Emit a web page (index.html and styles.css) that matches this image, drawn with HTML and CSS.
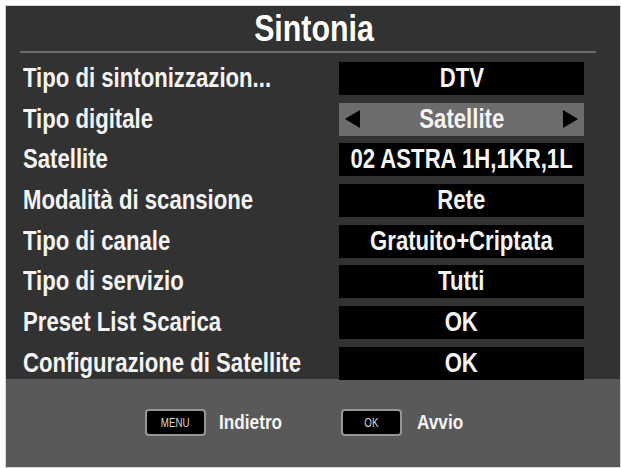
FILE: index.html
```html
<!DOCTYPE html>
<html lang="it">
<head>
<meta charset="utf-8">
<title>Sintonia</title>
<link rel="stylesheet" href="styles.css">
</head>
<body>
<div class="panel">
  <div class="header">
    <h1 class="title"><span class="narrow">Sintonia</span></h1>
  </div>
  <div class="divider"></div>
  <div class="rows">
    <div class="row">
      <div class="label"><span class="narrow">Tipo di sintonizzazion...</span></div>
      <div class="value"><span class="narrow">DTV</span></div>
    </div>
    <div class="row">
      <div class="label"><span class="narrow">Tipo digitale</span></div>
      <div class="value selected">
        <svg class="arrow arrow-left" viewBox="0 0 15 18" width="15" height="18"><polygon points="15,0 15,18 0,9" fill="#000"/></svg>
        <span class="narrow">Satellite</span>
        <svg class="arrow arrow-right" viewBox="0 0 15 18" width="15" height="18"><polygon points="0,0 0,18 15,9" fill="#000"/></svg>
      </div>
    </div>
    <div class="row">
      <div class="label"><span class="narrow">Satellite</span></div>
      <div class="value"><span class="narrow">02 ASTRA 1H,1KR,1L</span></div>
    </div>
    <div class="row">
      <div class="label"><span class="narrow">Modalità di scansione</span></div>
      <div class="value"><span class="narrow">Rete</span></div>
    </div>
    <div class="row">
      <div class="label"><span class="narrow">Tipo di canale</span></div>
      <div class="value"><span class="narrow">Gratuito+Criptata</span></div>
    </div>
    <div class="row">
      <div class="label"><span class="narrow">Tipo di servizio</span></div>
      <div class="value"><span class="narrow">Tutti</span></div>
    </div>
    <div class="row">
      <div class="label"><span class="narrow">Preset List Scarica</span></div>
      <div class="value"><span class="narrow">OK</span></div>
    </div>
    <div class="row">
      <div class="label"><span class="narrow">Configurazione di Satellite</span></div>
      <div class="value"><span class="narrow">OK</span></div>
    </div>
  </div>
  <div class="footer">
    <div class="hint hint-first">
      <span class="key"><span class="narrow key-text">MENU</span></span>
      <span class="hint-text"><span class="narrow">Indietro</span></span>
    </div>
    <div class="hint">
      <span class="key"><span class="narrow key-text">OK</span></span>
      <span class="hint-text"><span class="narrow">Avvio</span></span>
    </div>
  </div>
</div>
</body>
</html>
```

FILE: styles.css
```css
html, body {
  margin: 0;
  padding: 0;
  background: #ffffff;
}

body {
  width: 621px;
  height: 468px;
  overflow: hidden;
  font-family: "Liberation Sans", Arial, sans-serif;
  font-weight: bold;
  color: #f2f2f2;
}

.narrow {
  display: inline-block;
  flex: none;
  white-space: nowrap;
  transform: scaleX(0.82);
  transform-origin: center center;
}

.panel {
  margin: 6px 1px 0 6px;
  width: 614px;
  height: 461px;
  background: #323232;
  display: flex;
  flex-direction: column;
  box-shadow: 0 0 0 1px #d8d8d8;
}

.header {
  height: 45px;
  display: flex;
  align-items: center;
  justify-content: center;
}

.title {
  margin: 0;
  font-size: 37px;
  line-height: 45px;
  font-weight: bold;
  color: #ffffff;
  padding-left: 2px;
}

.divider {
  height: 2px;
  margin: 0 24px 0 14px;
  background: #6c6c6c;
}

.rows {
  padding: 9px 36px 0 17px;
  display: flex;
  flex-direction: column;
  gap: 7.7px;
  height: 326px;
  box-sizing: border-box;
}

.row {
  display: flex;
  align-items: center;
  height: 33px;
}

.label {
  flex: 1;
  min-width: 0;
  font-size: 27px;
  line-height: 33px;
  white-space: nowrap;
  color: #f4f4f4;
}

.label .narrow {
  transform-origin: left center;
}

.value {
  width: 245px;
  height: 33px;
  flex: none;
  background: #000000;
  font-size: 27px;
  line-height: 33px;
  color: #f4f4f4;
  white-space: nowrap;
  position: relative;
  display: flex;
  justify-content: center;
  align-items: center;
}

.value.selected {
  background: #6c6c6c;
}

.arrow {
  position: absolute;
  top: 7.5px;
}

.arrow-left {
  left: 6px;
}

.arrow-right {
  right: 6px;
}

.footer {
  flex: 1;
  background: #595959;
  display: flex;
  align-items: center;
  padding: 0 0 2px 139px;
  box-sizing: border-box;
}

.hint {
  display: flex;
  align-items: center;
}

.hint-first {
  width: 196px;
}

.key {
  width: 61px;
  height: 27px;
  box-sizing: border-box;
  background: #000000;
  border: 2px solid #969696;
  border-radius: 4px;
  display: flex;
  align-items: center;
  justify-content: center;
  font-size: 13px;
  font-weight: normal;
  color: #d8d8d8;
}

.key-text {
  transform: scaleX(0.75);
}

.hint-text {
  margin-left: 13px;
  font-size: 21px;
  color: #f4f4f4;
}

.hint-text .narrow {
  transform-origin: left center;
}

.hint:not(.hint-first) .hint-text {
  margin-left: 15px;
}
```
